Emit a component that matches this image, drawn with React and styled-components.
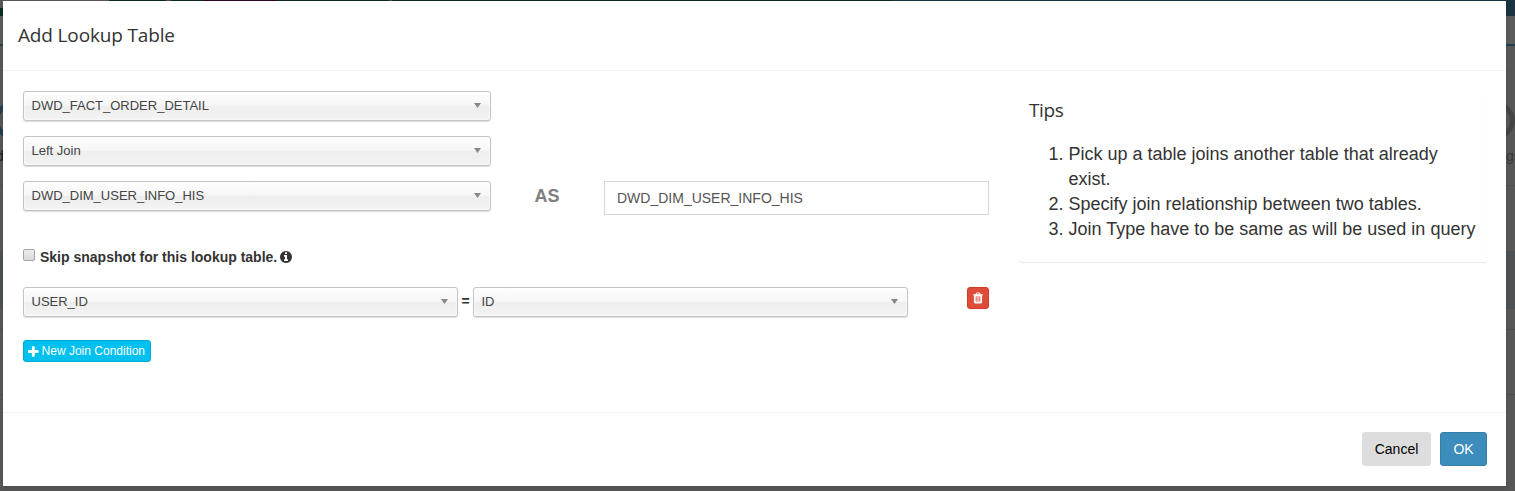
import React from "react";
import styled, { createGlobalStyle } from "styled-components";

const GlobalStyle = createGlobalStyle`
  *, *::before, *::after { box-sizing: border-box; }
  html, body { margin: 0; padding: 0; overflow: hidden; }
  body { font-family: "Liberation Sans", Arial, sans-serif; font-size: 14px; color: #333; }
`;

const Screen = styled.div`
  position: relative;
  width: 1515px;
  height: 491px;
  overflow: hidden;
  background: #575757;
`;

const Page = styled.div`
  display: flex;
  flex-direction: column;
  height: 100%;
`;

const TopBar = styled.div`
  display: flex;
  height: 16px;
  flex: none;
  background: #1a3340;
`;

const NavPart = styled.div`
  width: ${(p) => p.$w}px;
  background: ${(p) => p.$c};
  border-bottom: ${(p) => (p.$line ? "8px solid #0b3023" : "0")};
`;

const SubBar = styled.div`
  height: 30px;
  flex: none;
  background: #5b5b5b;
  border-bottom: 2px solid #203f50;
`;

const Steps = styled.div`
  height: 140px;
  flex: none;
  display: flex;
  justify-content: space-between;
  align-items: flex-start;
  padding-top: 56px;
  border-bottom: 1px solid #505050;
`;

const Step = styled.div`
  display: flex;
  flex-direction: column;
  align-items: flex-start;
  width: ${(p) => (p.$end ? 16 : 4)}px;
  color: ${(p) => (p.$end ? "#383838" : "#171717")};
  font-size: 14px;
  line-height: 18px;
  white-space: nowrap;
`;

const StepName = styled.span`
  margin-left: ${(p) => p.$ml}px;
`;

const Ring = styled.div`
  width: 37px;
  height: 37px;
  flex: none;
  border: 5px solid ${(p) => p.$c};
  border-radius: 50%;
  margin: 0 0 8px ${(p) => p.$ml}px;
`;

const Band = styled.div`
  height: ${(p) => p.$h}px;
  flex: none;
  background: ${(p) => p.$c || "transparent"};
  border-bottom: ${(p) => (p.$line ? "1px solid #4d4d4d" : "0")};
`;

const Dialog = styled.section`
  position: absolute;
  left: 3px;
  top: 1px;
  width: 1503px;
  height: 485px;
  display: flex;
  flex-direction: column;
  background: #fff;
  box-shadow: 0 2px 3px rgba(0, 0, 0, 0.125);
`;

const Header = styled.header`
  height: 70px;
  flex: none;
  padding: 22px 15px 0;
  border-bottom: 1px solid #f4f4f4;
`;

const Title = styled.h4`
  margin: 0;
  font-family: "Open Sans", "Noto Sans", sans-serif;
  font-weight: 400;
  font-size: 19px;
  line-height: 25px;
  letter-spacing: ${(p) => p.$ls}px;
  color: #333;
`;

const Body = styled.div`
  flex: 1;
  display: flex;
  align-items: flex-start;
  padding: 20px 19px 0 20px;
`;

const Form = styled.div`
  width: 966px;
  flex: none;
`;

const Row = styled.div`
  display: flex;
  align-items: flex-start;
  margin-bottom: ${(p) => p.$mb || 0}px;
`;

const Select = styled.div`
  display: flex;
  justify-content: space-between;
  width: ${(p) => p.$w}px;
  height: 30px;
  padding: 0 9px 0 7.5px;
  border: 1px solid #c4c4c4;
  border-radius: 3px;
  background: linear-gradient(#fff 0%, #fafafa 20%, #f6f6f6 48%, #eee 50%, #f0f0f0 75%, #f4f4f4 100%);
  box-shadow: 0 0 3px #fff inset, 0 1px 1px rgba(0, 0, 0, 0.14);
  font-size: 13px;
  line-height: 27px;
  color: #444;
`;

const Caret = styled.span`
  width: 7px;
  height: 5px;
  margin-top: 11px;
  background: #888;
  clip-path: polygon(0 0, 100% 0, 50% 100%);
`;

const As = styled.div`
  width: 112px;
  margin-right: 1px;
  padding-top: 2px;
  text-align: center;
  font-size: 18px;
  line-height: 27px;
  font-weight: 700;
  color: #808080;
`;

const Alias = styled.input`
  width: 385px;
  height: 34px;
  padding: 6px 12px;
  border: 1px solid #d2d6de;
  border-radius: 0;
  background: #fff;
  font: 14px "Liberation Sans", Arial, sans-serif;
  color: #555;
  outline: none;
`;

const SkipLabel = styled.label`
  display: flex;
  height: 20px;
  margin: 32px 0 20px;
  font-weight: 700;
  line-height: 20px;
`;

const CheckBox = styled.span`
  width: 12px;
  height: 12px;
  margin: 2px 5px 0 0;
  border: 1px solid #a5a5a5;
  border-radius: 2px;
  background: linear-gradient(#ececec, #d9d9d9);
`;

const InfoIcon = styled.svg`
  width: 12px;
  height: 12px;
  margin: 4px 0 0 3px;
`;

const Equals = styled.b`
  width: 15px;
  text-align: center;
  line-height: 28px;
`;

const DeleteButton = styled.button`
  display: flex;
  align-items: center;
  justify-content: center;
  width: 22px;
  height: 22px;
  margin-left: 59px;
  padding: 0;
  border: 1px solid #d73925;
  border-radius: 3px;
  background: #dd4b39;
`;

const AddButton = styled.button`
  display: flex;
  align-items: center;
  width: 128px;
  height: 22px;
  padding: 0 5px 0 4px;
  gap: 3px;
  border: 1px solid #00acd6;
  border-radius: 3px;
  background: #00c0ef;
  color: #fff;
  font: 12px/20px "Liberation Sans", Arial, sans-serif;
  white-space: nowrap;
`;

const Tips = styled.aside`
  width: 468px;
  height: 171px;
  margin-left: auto;
  padding: 7px 10px 0 10px;
  border-radius: 3px;
  box-shadow: 0 1px 1px rgba(0, 0, 0, 0.1);
`;

const TipList = styled.ol`
  margin: 19px 0 0;
  padding-left: 39.5px;
  font-size: 18px;
  line-height: 25px;
  color: #333;
`;

const Footer = styled.footer`
  display: flex;
  justify-content: flex-end;
  gap: 9px;
  height: 74px;
  flex: none;
  padding: 19px 19px 0;
  border-top: 1px solid #f4f4f4;
`;

const Button = styled.button`
  width: ${(p) => p.$w}px;
  height: 34px;
  padding: 0;
  border: 1px solid ${(p) => (p.$primary ? "#367fa9" : "#ddd")};
  border-radius: 3px;
  background: ${(p) => (p.$primary ? "#3c8dbc" : "#ddd")};
  color: ${(p) => (p.$primary ? "#fff" : "#000")};
  font: 14px/20px "Liberation Sans", Arial, sans-serif;
`;

const Picker = ({ width = 468, children }) => (
  <Select $w={width}>
    <span>{children}</span>
    <Caret />
  </Select>
);

const Backdrop = () => (
  <Page>
    <TopBar>
      <NavPart $w={109} $c="#575757" $line />
      <NavPart $w={57} $c="#0b2c22" />
      <NavPart $w={5} $c="#4d4d4d" />
      <NavPart $w={32} $c="#0b2c22" />
      <NavPart $w={74} $c="#350623" />
      <NavPart $w={112} $c="#0b2c22" />
      <NavPart $w={3} $c="#464a45" />
      <NavPart $w={500} $c="#0b2c22" />
    </TopBar>
    <SubBar />
    <Steps>
      <Step>
        <Ring $c="#203f50" $ml={-6} />
        <StepName $ml={-4}>d</StepName>
      </Step>
      <Step $end>
        <Ring $c="#424445" $ml={-21} />
        <StepName $ml={7}>gs</StepName>
      </Step>
    </Steps>
    <Band $h={65} />
    <Band $h={58} $c="#4e5154" />
    <Band $h={21} $line />
    <Band $h={65} $line />
  </Page>
);

export default function App() {
  return (
    <>
      <GlobalStyle />
      <Screen>
        <Backdrop />
        <Dialog>
          <Header>
            <Title $ls={-0.15}>Add Lookup Table</Title>
          </Header>
          <Body>
            <Form>
              <Row $mb={15}>
                <Picker>DWD_FACT_ORDER_DETAIL</Picker>
              </Row>
              <Row $mb={15}>
                <Picker>Left Join</Picker>
              </Row>
              <Row>
                <Picker>DWD_DIM_USER_INFO_HIS</Picker>
                <As>AS</As>
                <Alias defaultValue="DWD_DIM_USER_INFO_HIS" />
              </Row>
              <SkipLabel>
                <CheckBox />
                Skip snapshot for this lookup table.
                <InfoIcon viewBox="0 0 1536 1536">
                  <path
                    fill="#333"
                    d="M1024 1248v-160q0-14-9-23t-23-9h-96V544q0-14-9-23t-23-9H544q-14 0-23 9t-9 23v160q0 14 9 23t23 9h96v320h-96q-14 0-23 9t-9 23v160q0 14 9 23t23 9h448q14 0 23-9t9-23zM896 352V192q0-14-9-23t-23-9H672q-14 0-23 9t-9 23v160q0 14 9 23t23 9h192q14 0 23-9t9-23zM1536 768q0 209-103 385.500T1153.500 1433 768 1536t-385.500-103T103 1153.500 0 768t103-385.500T382.500 103 768 0t385.500 103T1433 382.500 1536 768z"
                  />
                </InfoIcon>
              </SkipLabel>
              <Row $mb={23}>
                <Picker width={435}>USER_ID</Picker>
                <Equals>=</Equals>
                <Picker width={435}>ID</Picker>
                <DeleteButton aria-label="Delete">
                  <svg width="10" height="12" viewBox="0 0 1408 1536" fill="#fff">
                    <path d="M512 1248V544q0-14-9-23t-23-9h-64q-14 0-23 9t-9 23v704q0 14 9 23t23 9h64q14 0 23-9t9-23zm256 0V544q0-14-9-23t-23-9h-64q-14 0-23 9t-9 23v704q0 14 9 23t23 9h64q14 0 23-9t9-23zm256 0V544q0-14-9-23t-23-9h-64q-14 0-23 9t-9 23v704q0 14 9 23t23 9h64q14 0 23-9t9-23zM480 256h448l-48-117q-7-9-17-11H546q-10 2-17 11zm928 32v64q0 14-9 23t-23 9h-96v948q0 83-47 143.500t-113 60.500H288q-66 0-113-58.500T128 1336V384H32q-14 0-23-9t-9-23v-64q0-14 9-23t23-9h309l70-167q15-37 54-63t79-26h320q40 0 79 26t54 63l70 167h309q14 0 23 9t9 23z" />
                  </svg>
                </DeleteButton>
              </Row>
              <AddButton>
                <svg width="11" height="11" viewBox="0 0 1408 1408" fill="#fff">
                  <path d="M1408 608v192q0 40-28 68t-68 28H896v416q0 40-28 68t-68 28H608q-40 0-68-28t-28-68V896H96q-40 0-68-28T0 800V608q0-40 28-68t68-28h416V96q0-40 28-68t68-28h192q40 0 68 28t28 68v416h416q40 0 68 28t28 68z" />
                </svg>
                New Join Condition
              </AddButton>
            </Form>
            <Tips>
              <Title $ls={-0.4}>Tips</Title>
              <TipList>
                <li>Pick up a table joins another table that already exist.</li>
                <li>Specify join relationship between two tables.</li>
                <li>Join Type have to be same as will be used in query</li>
              </TipList>
            </Tips>
          </Body>
          <Footer>
            <Button $w={69}>Cancel</Button>
            <Button $w={47} $primary>OK</Button>
          </Footer>
        </Dialog>
      </Screen>
    </>
  );
}
